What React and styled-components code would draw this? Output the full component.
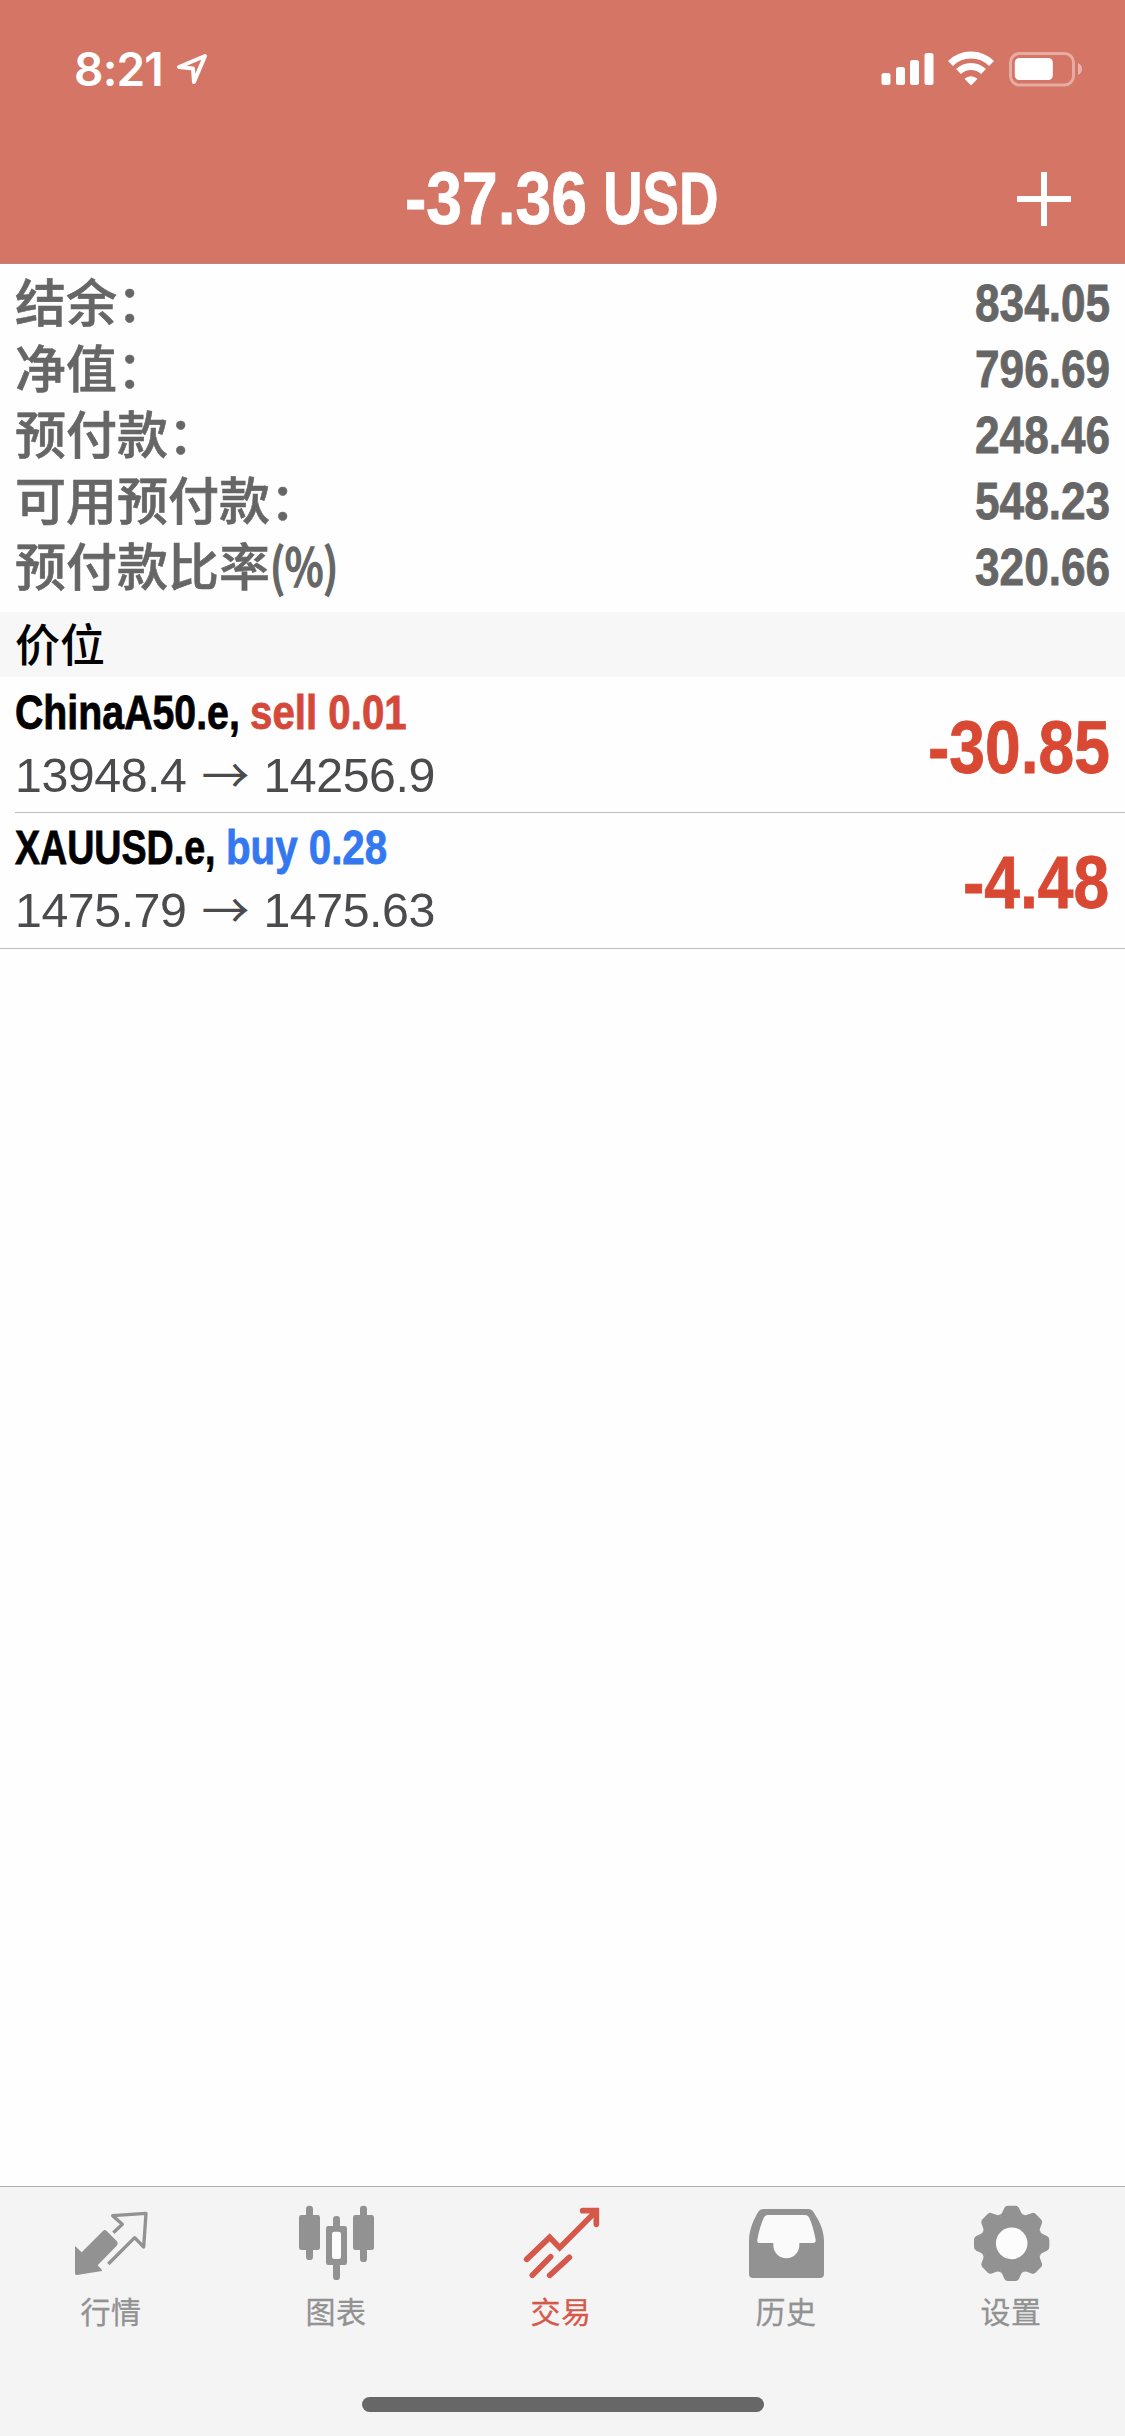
import React from 'react';
import styled, {createGlobalStyle, css} from 'styled-components';

const latin = '"Liberation Sans", Arial';
const cjk = '"Noto Sans CJK SC"';

const GlobalStyle = createGlobalStyle`
    *{
        box-sizing: border-box;
    }
    body{
        margin: 0;
        background: #fefefe;
        font-family: ${latin}, ${cjk}, sans-serif;
    }
    svg{
        display: block;
    }
`;

const Screen = styled.div`
    display: flex;
    flex-direction: column;
    width: 1125px;
    height: 2436px;
    overflow: hidden;
`;

const Header = styled.header`
    height: 264px;
    background: #d57565;
    border-bottom: 1px solid #bd8579;
    color: #fff;
`;

const StatusBar = styled.div`
    display: flex;
    justify-content: space-between;
    height: 132px;
    padding: 48px 41px 0 74px;
    >div{
        display: flex;
        height: 42px;
    }
`;

const Clock = styled.span`
    width: 102px;
    font: 600 46px/42px Inter, sans-serif;
    letter-spacing: -.8px;
`;

const NavBar = styled.div`
    display: grid;
    grid-template-columns: 108px 1fr 108px;
    align-items: center;
    height: 131px;
`;

const Title = styled.h1`
    display: flex;
    justify-content: center;
    gap: 18px;
    margin: 0;
    font-size: 75px;
    line-height: 133px;
`;

// bold grotesque squeezed to a condensed cut, $width is the room it takes
const Condensed = styled.span`
    display: inline-block;
    width: ${p => p.$width}px;
    white-space: pre;
    font-weight: 700;
    >span{
        display: inline-block;
        transform: scaleX(${p => p.$scale});
        transform-origin: 0 50%;
        -webkit-text-stroke: .8px currentColor;
    }
`;

const Summary = styled.dl`
    margin: 0;
    padding: 6px 15px 12px;
    color: #666;
`;

const SummaryRow = styled.div`
    display: flex;
    justify-content: space-between;
    height: 66px;
    dt{
        font: 500 51px/61px ${cjk}, sans-serif;
        -webkit-text-stroke: .6px currentColor;
    }
    dd{
        margin: 0;
        font-size: 52px;
        line-height: 66px;
    }
`;

const Unit = styled.span`
    display: inline-block;
    transform: scaleX(.81);
    transform-origin: 0 50%;
    -webkit-text-stroke: 1.6px currentColor;
`;

const SectionTitle = styled.h2`
    height: 65px;
    margin: 0;
    padding-left: 15px;
    background: #f7f7f7;
    color: #000;
    font: 500 45px/62px ${cjk}, sans-serif;
`;

const Positions = styled.ul`
    flex: 1;
    margin: 0;
    padding: 0;
    list-style: none;
`;

const Position = styled.li`
    padding-left: ${p => p.$last ? 0 : 15}px;
    >div{
        display: flex;
        justify-content: space-between;
        height: 136px;
        padding: ${p => p.$last ? '4px 15px 0' : '5px 15px 0 0'};
        border-bottom: 1px solid #bcbcbe;
    }
`;

const Symbol = styled.div`
    display: flex;
    font-size: 48.5px;
    line-height: 60px;
    color: #000;
`;

const Side = styled(Condensed)`
    ${p => p.$side === 'sell' ? css`color: #d5493a;` : css`color: #3478f0;`}
`;

const Price = styled.div`
    display: flex;
    color: #4b4b4d;
    font-size: 48.3px;
    line-height: 66px;
    letter-spacing: -.45px;
    >i{
        width: 77px;
        padding-left: 15px;
        font: 400 48px/60px ${cjk}, sans-serif;
    }
`;

const Profit = styled.div`
    color: #d94833;
    font-size: 75px;
    line-height: 130px;
`;

const TabBar = styled.nav`
    display: flex;
    height: 250px;
    flex-wrap: wrap;
    align-content: flex-start;
    border-top: 1px solid #adadad;
    background: #f4f4f4;
`;

const Tab = styled.a`
    display: flex;
    flex-direction: column;
    align-items: center;
    gap: 7px;
    width: 225px;
    padding: 16px 3px 0 0;
    color: ${p => p.$active ? '#d5594a' : '#929292'};
    font: 400 30px/40px ${cjk}, sans-serif;
    letter-spacing: .6px;
    -webkit-text-stroke: .3px currentColor;
`;

const HomeIndicator = styled.div`
    width: 402px;
    height: 15px;
    margin: 67px auto 0;
    border-radius: 8px;
    background: #676767;
`;

const TabIcon = ({children}) => <svg width="80" height="80" viewBox="0 0 240 240" fill="currentColor">{children}</svg>;

const QuotesIcon = () => <TabIcon>
    <path d="M12 129 L32 148 L95 85 Q101 78 107 84 L137 114 Q143 121 137 128 L80 187 L93 201 L93 204 L18 216 Q12 217 12 210 Z"/>
    <path d="M127 89 L154 64 L125 38 L225 31 L218 132 L191 104 L112 183" fill="none" stroke="currentColor" strokeWidth="10" strokeLinejoin="round"/>
</TabIcon>;

const ChartIcon = () => <TabIcon>
    <rect x="9" y="36" width="63" height="105" rx="7"/>
    <rect x="30" y="8" width="21" height="163" rx="10"/>
    <rect x="90" y="69" width="63" height="117" rx="7"/>
    <rect x="111" y="39" width="21" height="192" rx="10"/>
    <rect x="108" y="86" width="27" height="82" rx="7" fill="#fdfdfd"/>
    <rect x="171" y="36" width="63" height="105" rx="7"/>
    <rect x="192" y="8" width="21" height="169" rx="10"/>
</TabIcon>;

const TradeIcon = () => <TabIcon>
    <path d="M200 23 H226 V50 Z"/>
    <g fill="none" stroke="currentColor" strokeWidth="17" strokeLinecap="round">
        <path d="M17 169 L86 103 L116 134 L225 25"/>
        <path d="M185 23 H226 V64"/>
        <path d="M34 217 L89 161"/>
        <path d="M86 217 L145 163"/>
    </g>
</TabIcon>;

const HistoryIcon = () => <TabIcon>
    <path d="M9 115 C9 75 28 42 36 28 Q42 18 54 18 H186 Q197 18 203 28 C214 46 234 75 234 115 V213 Q234 225 222 225 H21 Q9 225 9 213 Z"/>
    <path fill="#fafafa" d="M66 36 H177 Q186 36 190 45 C198 62 204 85 209 110 Q210 120 202 120 H160 V127 A39 39 0 0 1 82 127 V120 H42 Q32 120 34 110 C38 85 46 62 53 45 Q57 36 66 36 Z"/>
</TabIcon>;

const SettingsIcon = () => <TabIcon>
    <g transform="translate(122 121)">
        {
            [0, 45, 90, 135, 180, 225, 270, 315].map(deg => <path
                key={deg}
                transform={`rotate(${deg})`}
                d="M0 0 L-36 -86 Q-31 -86 -28 -93 L-22 -106 Q-19 -113 -11 -113 H11 Q19 -113 22 -106 L28 -93 Q31 -86 36 -86 Z"
            />)
        }
        <circle r="85"/>
        <circle r="47.5" fill="#fcfcfc"/>
    </g>
</TabIcon>;

const LocationIcon = () => <svg width="32" height="42" viewBox="0 0 32 42">
    <path d="M29 8 L3 19 L17 20.5 L18 34 Z" fill="none" stroke="#fff" strokeWidth="4" strokeLinejoin="round"/>
</svg>;

const StatusIcons = () => <svg width="204" height="42" viewBox="0 0 204 42" fill="#fff">
    <rect x="1.5" y="25" width="9" height="12" rx="2.5"/>
    <rect x="16" y="19" width="9" height="18" rx="2.5"/>
    <rect x="30" y="12" width="9" height="25" rx="2.5"/>
    <rect x="44.5" y="5" width="9" height="32" rx="2.5"/>
    <g fill="none" stroke="#fff">
        <path d="M70.5 15.5 A29 29 0 0 1 111.5 15.5" strokeWidth="7"/>
        <path d="M78.5 23.5 A18 18 0 0 1 103.5 23.5" strokeWidth="7"/>
    </g>
    <path d="M91 37.5 L84.5 30.8 A9.3 9.3 0 0 1 97.5 30.8 Z"/>
    <rect x="130.5" y="5.5" width="63" height="31.5" rx="9" fill="none" stroke="#fff" strokeOpacity=".4" strokeWidth="3"/>
    <rect x="134.8" y="10" width="38" height="22" rx="4.5"/>
    <path d="M198 15 Q202 17 202 21 Q202 25 198 27 Z" fillOpacity=".45"/>
</svg>;

const PlusIcon = () => <svg width="54" height="54" viewBox="0 0 54 54">
    <path d="M27 0 V54 M0 27 H54" stroke="#fff" strokeWidth="6"/>
</svg>;

const account = [
    {label: '结余：', value: '834.05'},
    {label: '净值：', value: '796.69'},
    {label: '预付款：', value: '248.46'},
    {label: '可用预付款：', value: '548.23'},
    {label: '预付款比率', unit: '(%)', value: '320.66'},
];

const positions = [
    {symbol: 'ChinaA50.e,', symbolWidth: 235, symbolScale: .81, side: 'sell', lot: '0.01', open: '13948.4', current: '14256.9', profit: '-30.85', profitWidth: 182},
    {symbol: 'XAUUSD.e,', symbolWidth: 211, symbolScale: .775, side: 'buy', lot: '0.28', open: '1475.79', current: '1475.63', profit: '-4.48', profitWidth: 147},
];

const tabs = [
    {name: '行情', Icon: QuotesIcon},
    {name: '图表', Icon: ChartIcon},
    {name: '交易', Icon: TradeIcon, active: true},
    {name: '历史', Icon: HistoryIcon},
    {name: '设置', Icon: SettingsIcon},
];

class App extends React.Component {
    render() {
        return <Screen>
            <GlobalStyle/>
            <Header>
                <StatusBar>
                    <div>
                        <Clock>8:21</Clock>
                        <LocationIcon/>
                    </div>
                    <StatusIcons/>
                </StatusBar>
                <NavBar>
                    <span/>
                    <Title>
                        <Condensed $width={180} $scale={.855}><span>-37.36</span></Condensed>
                        <Condensed $width={117} $scale={.73}><span>USD</span></Condensed>
                    </Title>
                    <PlusIcon/>
                </NavBar>
            </Header>
            <Summary>
                {
                    account.map(val => <SummaryRow key={val.label}>
                        <dt>{val.label}{val.unit && <Unit>{val.unit}</Unit>}</dt>
                        <dd><Condensed $width={135} $scale={.85}><span>{val.value}</span></Condensed></dd>
                    </SummaryRow>)
                }
            </Summary>
            <SectionTitle>价位</SectionTitle>
            <Positions>
                {
                    positions.map((val, index) => <Position key={val.symbol} $last={index === positions.length - 1}>
                        <div>
                            <div>
                                <Symbol>
                                    <Condensed $width={val.symbolWidth} $scale={val.symbolScale}><span>{val.symbol}</span></Condensed>
                                    <Side $side={val.side} $width={165} $scale={.83}><span>{val.side} {val.lot}</span></Side>
                                </Symbol>
                                <Price>
                                    <span>{val.open}</span>
                                    <i>→</i>
                                    <span>{val.current}</span>
                                </Price>
                            </div>
                            <Profit>
                                <Condensed $width={val.profitWidth} $scale={.855}><span>{val.profit}</span></Condensed>
                            </Profit>
                        </div>
                    </Position>)
                }
            </Positions>
            <TabBar>
                {
                    tabs.map(({name, Icon, active}) => <Tab key={name} $active={active}>
                        <Icon/>
                        {name}
                    </Tab>)
                }
                <HomeIndicator/>
            </TabBar>
        </Screen>
    }
}

export default App;
